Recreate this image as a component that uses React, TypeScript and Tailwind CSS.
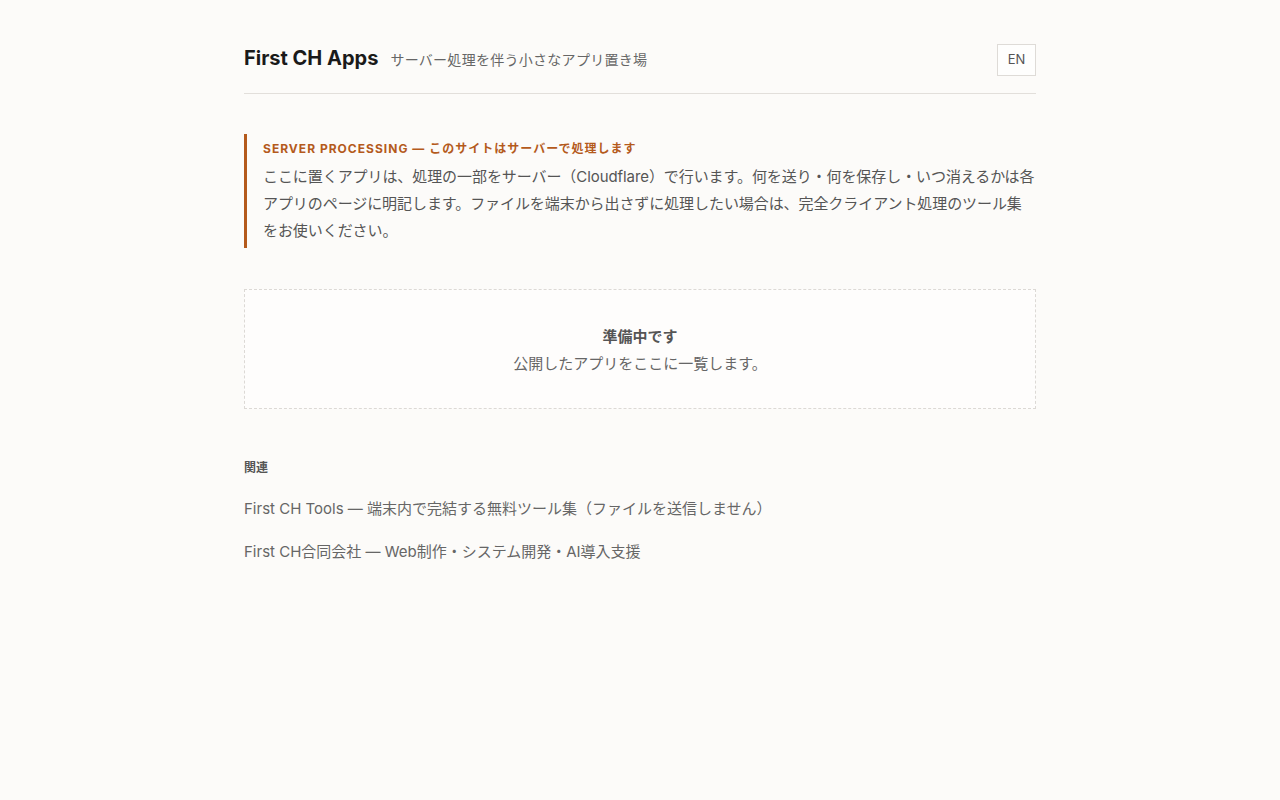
export default function App() {
  return (
    <div
      className="min-h-screen bg-[#fcfbf9] text-[#555]"
      style={{ fontFamily: '"Inter", "Noto Sans CJK JP", sans-serif' }}
    >
      <div className="mx-auto w-[792px]">
        {/* Header */}
        <header className="flex items-center justify-between border-b border-[#e2dfdb] pt-[44px] pb-[17px]">
          <div className="flex items-baseline gap-3 -mt-1">
            <h1 className="text-[20px] font-bold leading-7 text-[#1a1a1a]">First CH Apps</h1>
            <p className="text-[14px] tracking-[0.02em] text-[#666]">サーバー処理を伴う小さなアプリ置き場</p>
          </div>
          <button className="h-8 w-[39px] border border-[#dedbd7] bg-[#fefefd] text-[13px] text-[#555]">
            EN
          </button>
        </header>

        {/* Notice */}
        <section className="mt-10 border-l-[3px] border-[#b45a1c] pt-[6px] pb-[4px] pl-4">
          <p className="mb-[5px] text-[12px] font-bold uppercase leading-[18px] tracking-[0.085em] text-[#b45a1c]">
            Server processing — このサイトはサーバーで処理します
          </p>
          <p className="text-[15px] leading-[27px] tracking-[-0.005em] text-[#555]">
            ここに置くアプリは、処理の一部をサーバー（Cloudflare）で行います。何を送り・何を保存し・いつ消えるかは各アプリのページに明記します。ファイルを端末から出さずに処理したい場合は、完全クライアント処理のツール集をお使いください。
          </p>
        </section>

        {/* Empty state */}
        <section className="mt-[41px] border border-dashed border-[#dcd9d5] bg-[#fefdfc] pt-[33px] pb-[31px] text-center">
          <p className="text-[15px] font-bold leading-[27px] text-[#555]">準備中です</p>
          <p className="text-[15px] leading-[27px] text-[#666]">公開したアプリをここに一覧します。</p>
        </section>

        {/* Related */}
        <section className="mt-[50px]">
          <h2 className="mb-[18px] text-[12px] font-bold leading-[18px] text-[#555]">関連</h2>
          <ul className="space-y-4">
            <li>
              <a href="#" className="text-[15px] leading-[27px] text-[#666]">
                First CH Tools — 端末内で完結する無料ツール集（ファイルを送信しません）
              </a>
            </li>
            <li>
              <a href="#" className="text-[15px] leading-[27px] text-[#666]">
                First CH合同会社 — Web制作・システム開発・AI導入支援
              </a>
            </li>
          </ul>
        </section>
      </div>
    </div>
  );
}
